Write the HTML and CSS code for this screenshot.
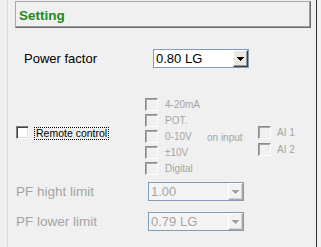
FILE: index.html
```html
<!DOCTYPE html>
<html lang="en">
<head>
  <meta charset="UTF-8">
  <title>Setting</title>
  <link rel="stylesheet" href="styles.css">
</head>
<body>
  <div class="panel">
    <div class="title">Setting</div>

    <div class="field power">
      <span class="label">Power factor</span>
      <div class="combo">
        <span class="value">0.80 LG</span>
        <span class="drop"><svg width="7" height="4" viewBox="0 0 7 4"><path d="M0 0h7v1h-1v1h-1v1h-1v1h-1v-1h-1v-1h-1v-1h-1z" fill="#000"/></svg></span>
      </div>
    </div>

    <div class="remote">
      <div class="toggle">
        <span class="box"></span>
        <span class="focus">Remote control</span>
      </div>
      <ul class="modes">
        <li><span class="box off"></span>4-20mA</li>
        <li><span class="box off"></span>POT.</li>
        <li><span class="box off"></span>0-10V</li>
        <li><span class="box off"></span>&plusmn;10V</li>
        <li><span class="box off"></span>Digital</li>
      </ul>
      <span class="on-input">on input</span>
      <ul class="inputs">
        <li><span class="box off"></span>AI 1</li>
        <li><span class="box off"></span>AI 2</li>
      </ul>
    </div>

    <div class="field limit first">
      <span class="label">PF hight limit</span>
      <div class="combo disabled">
        <span class="value">1.00</span>
        <span class="drop"><svg width="7" height="4" viewBox="0 0 7 4"><path d="M0 0h7v1h-1v1h-1v1h-1v1h-1v-1h-1v-1h-1v-1h-1z" fill="#a0a0a0"/></svg></span>
      </div>
    </div>
    <div class="field limit">
      <span class="label">PF lower limit</span>
      <div class="combo disabled">
        <span class="value">0.79 LG</span>
        <span class="drop"><svg width="7" height="4" viewBox="0 0 7 4"><path d="M0 0h7v1h-1v1h-1v1h-1v1h-1v-1h-1v-1h-1v-1h-1z" fill="#a0a0a0"/></svg></span>
      </div>
    </div>
  </div>
</body>
</html>
```

FILE: styles.css
```css
/* reset */
body{
  margin:0;
  background:#f0f0f0;
  font-family:"Liberation Sans",Arial,sans-serif;
  color:#000;
}
ul{
  margin:0;
  padding:0;
  list-style:none;
}
.panel{
  box-sizing:border-box;
  width:310px;
  height:247px;
  margin-left:7px;
  border-left:1px solid #d8d8d8;
  border-right:1px solid #303030;
  overflow:hidden;
}
/* group title */
.title{
  box-sizing:border-box;
  width:296px;
  height:27px;
  margin:1px 0 0 7px;
  padding:6px 0 0 3px;
  border:1px solid;
  border-color:#a8a8a8 #696969 #696969 #a8a8a8;
  box-shadow:inset -1px -1px #a0a0a0;
  font-size:13.5px;
  line-height:15px;
  font-weight:bold;
  color:#1f8a1f;
}
/* label + combo rows */
.field{
  display:flex;
  align-items:center;
}
.power{
  margin-top:21px;
  padding-left:16px;
}
.power .label{
  width:129px;
  font-size:13px;
}
.limit{
  margin-top:11px;
  padding-left:8px;
}
.limit.first{
  margin-top:6px;
}
.limit .label{
  width:132px;
  font-size:13.5px;
  color:#a4a4a4;
}
.combo{
  box-sizing:border-box;
  width:96px;
  height:19px;
  display:flex;
  border:1px solid #7f9db9;
  background:#fff;
}
.combo .value{
  flex:1;
  padding-left:2px;
  font-size:13px;
  line-height:17px;
}
.combo .drop{
  box-sizing:border-box;
  width:15px;
  height:17px;
  display:flex;
  align-items:center;
  justify-content:center;
  background:#ece9e4;
  border:1px solid;
  border-color:#fff #404040 #404040 #fff;
  box-shadow:inset -1px -1px #9a9a9a;
}
.combo .drop svg{
  display:block;
  margin-top:1px;
}
.combo.disabled{
  background:#f4f4f4;
}
.combo.disabled .value{
  color:#a4a4a4;
}
.combo.disabled .drop{
  background:#f2f2f2;
  border-color:#fff #a8a8a8 #a8a8a8 #fff;
  box-shadow:inset -1px -1px #d4d4d4;
}
/* checkboxes */
.box{
  box-sizing:border-box;
  flex:none;
  width:13px;
  height:13px;
  border:1px solid;
  border-color:#808080 #fff #fff #808080;
  box-shadow:inset 1px 1px #404040,inset -1px -1px #dcdcdc;
  background:#fff;
}
.box.off{
  background:#f0f0f0;
  border-color:#8a8a8a #fcfcfc #fcfcfc #8a8a8a;
  box-shadow:inset 1px 1px #a8a8a8;
}
.remote{
  display:flex;
  align-items:flex-start;
  margin-top:28px;
  padding-left:8px;
}
.toggle{
  width:129px;
  flex:none;
  display:flex;
  align-items:flex-start;
  margin-top:30px;
}
.toggle .box{
  margin-right:6px;
}
.focus{
  margin-top:2px;
  padding:0 1px;
  font-size:10.5px;
  line-height:11px;
  outline:1px dotted #000;
}
.modes{
  width:62px;
  flex:none;
  font-size:10px;
  color:#a4a4a4;
}
.modes li{
  height:16px;
  display:flex;
  align-items:center;
}
.modes .box{
  margin-right:7px;
}
.on-input{
  width:51px;
  flex:none;
  margin-top:35px;
  font-size:10px;
  line-height:13px;
  color:#a4a4a4;
}
.inputs{
  margin-top:28px;
  font-size:10px;
  color:#a4a4a4;
}
.inputs li{
  height:17px;
  display:flex;
  align-items:center;
}
.inputs .box{
  margin-right:6px;
}
```
